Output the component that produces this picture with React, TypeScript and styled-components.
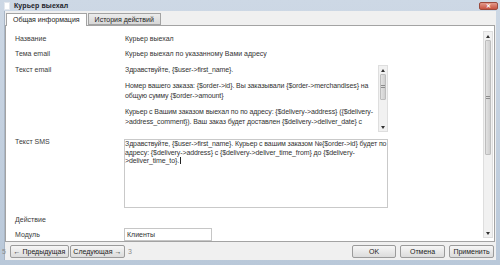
import React from "react";
import styled, { createGlobalStyle } from "styled-components";

const Global = createGlobalStyle`
  html, body { margin: 0; padding: 0; background: #fff; }
  body { font-family: "Liberation Sans", Arial, sans-serif; font-size: 7px; color: #333; }
`;

const Window = styled.div`
  width: 500px;
  height: 265px;
  box-sizing: border-box;
  background: linear-gradient(#cdd8e5, #b9c8d9);
  display: flex;
  flex-direction: column;
  padding: 0 4px 5px 4px;
  overflow: hidden;
`;

const TitleBar = styled.div`
  height: 11px;
  flex: none;
  display: flex;
  align-items: center;
  gap: 4px;
  margin-right: -2px;
`;

const TitleIcon = styled.div`
  width: 6px;
  height: 8px;
  background: #fff;
  border: 1px solid #e4e8ee;
  box-sizing: border-box;
`;

const Title = styled.div`
  font-weight: bold;
  font-size: 7px;
  color: #1d232b;
  letter-spacing: 0.1px;
`;

const Close = styled.div`
  margin-left: auto;
  width: 19px;
  height: 8px;
  border-radius: 2px;
  background: linear-gradient(#e39a8c, #c7523f);
  border: 1px solid #9b4a3d;
  box-sizing: border-box;
  display: flex;
  align-items: center;
  justify-content: center;
  color: #fff;
  font-size: 6px;
  font-weight: bold;
  line-height: 1;
`;

const Body = styled.div`
  flex: 1;
  display: flex;
  flex-direction: column;
  background: #f0f0f0;
  border-left: 1px solid #a9b6c6;
  min-height: 0;
`;

const Tabs = styled.div`
  display: flex;
  padding: 2px 0 0 1px;
  height: 12px;
  flex: none;
  align-items: flex-end;
  position: relative;
  z-index: 1;
`;

const Tab = styled.div<{ $active?: boolean }>`
  height: ${(p) => (p.$active ? "13px" : "12px")};
  box-sizing: border-box;
  padding: 0 6px;
  display: flex;
  align-items: center;
  border: 1px solid #a3a3a3;
  border-bottom: ${(p) => (p.$active ? "none" : "1px solid #a3a3a3")};
  background: ${(p) => (p.$active ? "#fff" : "linear-gradient(#ececec, #d7d7d7)")};
  color: #222;
  margin-right: 1px;
  align-self: flex-start;
  padding-bottom: ${(p) => (p.$active ? "1px" : "0")};
`;

const Panel = styled.div`
  flex: 1;
  display: flex;
  background: #fff;
  border: 1px solid #a3a3a3;
  margin-right: 1px;
  min-height: 0;
  overflow: hidden;
`;

const Form = styled.div`
  flex: 1;
  padding: 5px 0 0 9px;
  display: flex;
  flex-direction: column;
`;

const Row = styled.div<{ $h: number }>`
  display: flex;
  height: ${(p) => p.$h}px;
  flex: none;
`;

const Label = styled.div<{ $pt?: number; $lh?: number }>`
  width: 109px;
  flex: none;
  padding-top: ${(p) => p.$pt ?? 0}px;
  line-height: ${(p) => p.$lh ?? 15}px;
  color: #3a3a3a;
`;

const Value = styled.div`
  line-height: 15px;
  padding-left: 1px;
  color: #333;
`;

const EmailBox = styled.div`
  margin-top: 2px;
  width: 264px;
  height: 71px;
  display: flex;
  box-sizing: border-box;
`;

const EmailText = styled.div`
  flex: 1;
  padding: 2px 0 0 1px;
  line-height: 10.5px;
  overflow: hidden;
  white-space: nowrap;
  letter-spacing: -0.1px;
`;

const Para = styled.div`
  margin-bottom: 5px;
`;

const SmsBox = styled.div`
  margin-top: 2px;
  width: 264px;
  height: 69px;
  box-sizing: border-box;
  border: 1px solid #c9c9c9;
  line-height: 8.5px;
  white-space: nowrap;
  overflow: hidden;
  letter-spacing: -0.1px;
`;

const Caret = styled.span`
  display: inline-block;
  width: 1px;
  height: 7px;
  background: #222;
  vertical-align: -1px;
  margin-left: 1px;
`;

const Input = styled.div`
  width: 88px;
  height: 13px;
  box-sizing: border-box;
  border: 1px solid #c6c6c6;
  line-height: 11px;
  padding-left: 2px;
`;

const Scroll = styled.div<{ $w: number; $mt: number; $mb: number; $mr: number }>`
  width: ${(p) => p.$w}px;
  flex: none;
  margin: ${(p) => `${p.$mt}px ${p.$mr}px ${p.$mb}px 0`};
  background: #f1f1f1;
  border: 1px solid #dedede;
  box-sizing: border-box;
  display: flex;
  flex-direction: column;
`;

const Arrow = styled.div`
  height: 8px;
  flex: none;
  display: flex;
  align-items: center;
  justify-content: center;
`;

const Thumb = styled.div<{ $h: number }>`
  height: ${(p) => p.$h}px;
  flex: none;
  margin: 0 1px;
  background: linear-gradient(90deg, #e2e2e2, #cfcfcf);
  border: 1px solid #bdbdbd;
  border-radius: 1px;
  box-sizing: border-box;
  display: flex;
  align-items: center;
  justify-content: center;
`;

const Grip = styled.div`
  width: 4px;
  height: 4px;
  background: repeating-linear-gradient(#8c8c8c 0 1px, transparent 1px 2px);
`;

const Track = styled.div`
  flex: 1;
`;

const Footer = styled.div`
  height: 18px;
  flex: none;
  display: flex;
  align-items: center;
  padding-right: 2px;
`;

const Num = styled.div`
  color: #8a8a8a;
  margin: 0 4px 0 -3px;
`;

const Num2 = styled.div`
  color: #8a8a8a;
  margin-left: 3px;
`;

const Btn = styled.div<{ $w: number; $ml?: number }>`
  width: ${(p) => p.$w}px;
  margin-left: ${(p) => p.$ml ?? 0}px;
  height: 13px;
  box-sizing: border-box;
  border: 1px solid #9b9b9b;
  border-radius: 2px;
  background: linear-gradient(#f6f6f6, #dcdcdc);
  display: flex;
  align-items: center;
  justify-content: center;
  color: #222;
  white-space: nowrap;
`;

const Spacer = styled.div`
  flex: 1;
`;

const Tri = ({ down }: { down?: boolean }) => (
  <svg width="4" height="3" viewBox="0 0 4 3">
    <path d={down ? "M0 0H4L2 3Z" : "M0 3H4L2 0Z"} fill="#333" />
  </svg>
);

const Scrollbar = ({
  w, mt, mb, mr, thumb,
}: { w: number; mt: number; mb: number; mr: number; thumb: number }) => (
  <Scroll $w={w} $mt={mt} $mb={mb} $mr={mr}>
    <Arrow><Tri /></Arrow>
    <Thumb $h={thumb}><Grip /></Thumb>
    <Track />
    <Arrow><Tri down /></Arrow>
  </Scroll>
);

export default function App() {
  return (
    <>
      <Global />
      <Window>
        <TitleBar>
          <TitleIcon />
          <Title>Курьер выехал</Title>
          <Close>✕</Close>
        </TitleBar>
        <Body>
          <Tabs>
            <Tab $active>Общая информация</Tab>
            <Tab>История действий</Tab>
          </Tabs>
          <Panel>
            <Form>
              <Row $h={15}>
                <Label>Название</Label>
                <Value>Курьер выехал</Value>
              </Row>
              <Row $h={15}>
                <Label>Тема email</Label>
                <Value>Курьер выехал по указанному Вами адресу</Value>
              </Row>
              <Row $h={76}>
                <Label $pt={4} $lh={10}>Текст email</Label>
                <EmailBox>
                  <EmailText>
                    <Para>Здравствуйте, {"{$user->first_name}"}.</Para>
                    <Para>
                      Номер вашего заказа: {"{$order->id}"}. Вы заказывали {"{$order->merchandises}"} на
                      <br />
                      общую сумму {"{$order->amount}"}
                    </Para>
                    <Para>
                      Курьер с Вашим заказом выехал по по адресу: {"{$delivery->address}"} ({"{$delivery-"}
                      <br />
                      {">address_comment})"}. Ваш заказ будет доставлен {"{$delivery->deliver_date}"} с
                    </Para>
                  </EmailText>
                  <Scrollbar w={10} mt={2} mb={2} mr={0} thumb={26} />
                </EmailBox>
              </Row>
              <Row $h={73}>
                <Label $lh={10}>Текст SMS</Label>
                <SmsBox>
                  Здравствуйте, {"{$user->first_name}"}. Курьер с вашим заказом №{"{$order->id}"} будет по
                  <br />
                  адресу: {"{$delivery->address}"} с {"{$delivery->deliver_time_from}"} до {"{$delivery-"}
                  <br />
                  {">deliver_time_to}"}.<Caret />
                </SmsBox>
              </Row>
              <Row $h={18}>
                <Label $pt={5} $lh={10}>Действие</Label>
              </Row>
              <Row $h={13}>
                <Label $lh={13}>Модуль</Label>
                <Input>Клиенты</Input>
              </Row>
            </Form>
            <Scrollbar w={10} mt={5} mb={3} mr={1} thumb={115} />
          </Panel>
          <Footer>
            <Num>5</Num>
            <Btn $w={59}>← Предыдущая</Btn>
            <Btn $w={55} $ml={1}>Следующая →</Btn>
            <Num2>3</Num2>
            <Spacer />
            <Btn $w={44}>OK</Btn>
            <Btn $w={45} $ml={4}>Отмена</Btn>
            <Btn $w={45} $ml={4}>Применить</Btn>
          </Footer>
        </Body>
      </Window>
    </>
  );
}
